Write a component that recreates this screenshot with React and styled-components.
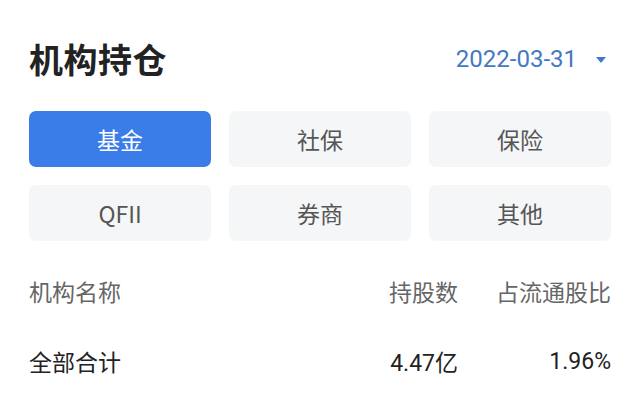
import styled, { createGlobalStyle } from "styled-components";

const GlobalStyle = createGlobalStyle`
  html, body {
    margin: 0;
    padding: 0;
    background: #ffffff;
  }
  body {
    font-family: "Noto Sans CJK SC", "Noto Sans", sans-serif;
    -webkit-font-smoothing: antialiased;
  }
`;

const tabs = ["基金", "社保", "保险", "QFII", "券商", "其他"];

const App = () => {
  return (
    <>
      <GlobalStyle />
      <Page>
        <TopBar>
          <Title>机构持仓</Title>
          <DatePicker>
            <span>2022-03-31</span>
            <Caret />
          </DatePicker>
        </TopBar>

        <TabGrid>
          {tabs.map((t, i) => (
            <Tab key={t} $active={i === 0}>
              {t}
            </Tab>
          ))}
        </TabGrid>

        <Table>
          <HeadCell>机构名称</HeadCell>
          <HeadCell $right>持股数</HeadCell>
          <HeadCell $right>占流通股比</HeadCell>

          <Cell>全部合计</Cell>
          <NumCell>
            4.47<Unit>亿</Unit>
          </NumCell>
          <NumCell>1.96%</NumCell>
        </Table>
      </Page>
    </>
  );
};

export default App;

const Page = styled.main`
  width: 640px;
  height: 412px;
  box-sizing: border-box;
  padding: 29px 29px 0 29px;
  overflow: hidden;
`;

const TopBar = styled.header`
  display: flex;
  align-items: center;
  justify-content: space-between;
  height: 60px;
`;

const Title = styled.h1`
  margin: 0;
  font-size: 34px;
  font-weight: 700;
  color: #222222;
  line-height: 1;
  letter-spacing: 0.5px;
`;

const DatePicker = styled.div`
  display: flex;
  align-items: center;
  gap: 19px;
  padding-right: 5px;
  color: #4379c2;
  font-family: Roboto, "Noto Sans", sans-serif;
  font-size: 24px;
  line-height: 1;
`;

const Caret = styled.i`
  width: 0;
  height: 0;
  border-left: 5px solid transparent;
  border-right: 5px solid transparent;
  border-top: 6px solid #3f7bd0;
  margin-top: 2px;
`;

const TabGrid = styled.div`
  display: grid;
  grid-template-columns: repeat(3, 1fr);
  grid-auto-rows: 56px;
  gap: 18px;
  margin-top: 22px;
`;

const Tab = styled.div`
  display: flex;
  align-items: center;
  justify-content: center;
  border-radius: 7px;
  font-size: 23px;
  background: ${(p) => (p.$active ? "#3a7de8" : "#f5f6f8")};
  color: ${(p) => (p.$active ? "#ffffff" : "#555555")};
`;

const Table = styled.div`
  display: grid;
  grid-template-columns: 1fr auto auto;
  grid-auto-rows: 70px;
  column-gap: 38px;
  margin-top: 15px;
  align-items: center;
`;

const HeadCell = styled.div`
  font-size: 23px;
  color: #666666;
  text-align: ${(p) => (p.$right ? "right" : "left")};
`;

const Cell = styled.div`
  font-size: 23px;
  color: #222222;
`;

const NumCell = styled.div`
  text-align: right;
  font-family: Roboto, "Noto Sans CJK SC", sans-serif;
  font-size: 23px;
  color: #222222;
`;

const Unit = styled.span`
  font-family: "Noto Sans CJK SC", sans-serif;
`;
